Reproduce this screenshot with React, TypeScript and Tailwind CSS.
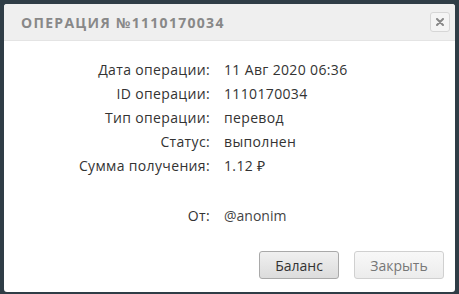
import React from 'react';

const rows = [
  { label: 'Дата операции:', value: '11 Авг 2020 06:36' },
  { label: 'ID операции:', value: '1110170034' },
  { label: 'Тип операции:', value: 'перевод' },
  { label: 'Статус:', value: 'выполнен' },
  { label: 'Сумма получения:', value: '1.12 ₽' },
];

export default function App() {
  return (
    <div className="w-[459px] h-[294px] bg-[#2f3d46] p-[4px] overflow-hidden">
      <div className="w-[451px] h-[288px] bg-white rounded-[3px] flex flex-col overflow-hidden">
        {/* Header */}
        <div className="h-[37px] bg-[#efefef] flex items-center justify-between pl-[17px] pr-[5px] border-b border-[#e4e4e4]">
          <h1
            className="text-[14px] font-bold tracking-[1.3px] text-[#888]"
            style={{ fontFamily: '"Open Sans", sans-serif' }}
          >
            ОПЕРАЦИЯ №1110170034
          </h1>
          <button className="w-[20px] h-[20px] rounded-[3px] border border-[#d6d6d6] bg-[#f4f4f4] flex items-center justify-center">
            <svg width="8" height="8" viewBox="0 0 8 8">
              <path d="M1 1 L7 7 M7 1 L1 7" stroke="#888" strokeWidth="2" strokeLinecap="round" />
            </svg>
          </button>
        </div>

        {/* Details */}
        <div
          className="grid grid-cols-[206px_1fr] gap-x-[14px] pt-[17px] text-[14px] tracking-[0.35px] text-[#333]"
          style={{ fontFamily: '"Open Sans", sans-serif' }}
        >
          {rows.map((r) => (
            <React.Fragment key={r.label}>
              <div className="text-right h-[24px] leading-[24px]">{r.label}</div>
              <div className="h-[24px] leading-[24px]">{r.value}</div>
            </React.Fragment>
          ))}
          <div className="text-right h-[24px] leading-[24px] mt-[26px]">От:</div>
          <div className="h-[24px] leading-[24px] mt-[26px] text-[#444] tracking-normal">@anonim</div>
        </div>

        {/* Footer */}
        <div
          className="flex justify-end gap-[15px] pr-[11px] mt-[23px] text-[14px]"
          style={{ fontFamily: '"Open Sans", sans-serif' }}
        >
          <button className="w-[80px] h-[28px] rounded-[3px] border border-[#a9a9a9] bg-gradient-to-b from-[#f0f0f0] to-[#dcdcdc] text-[#333]">
            Баланс
          </button>
          <button className="w-[90px] h-[28px] rounded-[3px] border border-[#d0d0d0] bg-gradient-to-b from-[#f8f8f8] to-[#ececec] text-[#777]">
            Закрыть
          </button>
        </div>
      </div>
    </div>
  );
}
